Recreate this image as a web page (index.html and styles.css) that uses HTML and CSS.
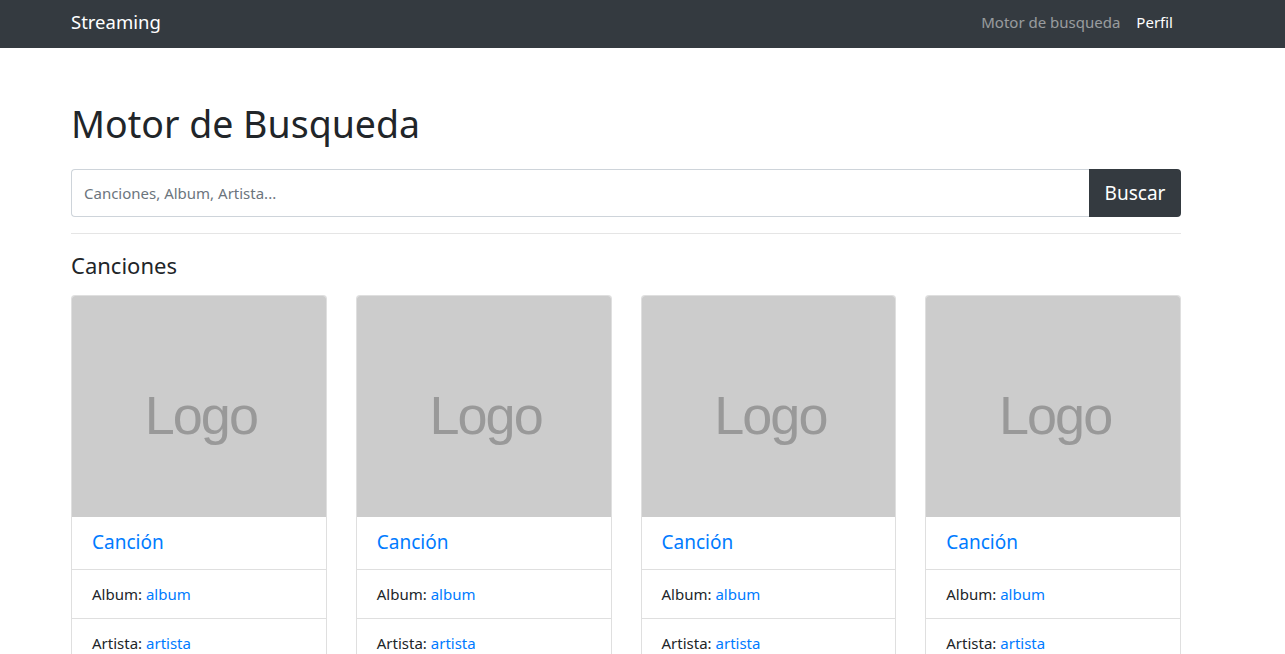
FILE: index.html
```html
<!DOCTYPE html>
<html lang="es">
<head>
<meta charset="utf-8">
<title>Streaming</title>
<link rel="stylesheet" href="styles.css">
</head>
<body>
<nav class="navbar">
  <div class="navbar-inner">
    <a class="brand" href="#">Streaming</a>
    <ul class="nav">
      <li><a class="nav-link" href="#">Motor de busqueda</a></li>
      <li><a class="nav-link active" href="#">Perfil</a></li>
    </ul>
  </div>
</nav>
<main class="container">
  <h1 class="title">Motor de Busqueda</h1>
  <form class="search">
    <input class="search-input" type="text" placeholder="Canciones, Album, Artista...">
    <button class="search-btn" type="button">Buscar</button>
  </form>
  <hr class="divider">
  <h4 class="section-title">Canciones</h4>
  <div class="cards">
    <div class="card">
      <div class="card-img"><span>Logo</span></div>
      <div class="card-body"><a href="#" class="card-title">Canción</a></div>
      <ul class="list">
        <li class="list-item">Album: <a href="#">album</a></li>
        <li class="list-item">Artista: <a href="#">artista</a></li>
      </ul>
    </div>
    <div class="card">
      <div class="card-img"><span>Logo</span></div>
      <div class="card-body"><a href="#" class="card-title">Canción</a></div>
      <ul class="list">
        <li class="list-item">Album: <a href="#">album</a></li>
        <li class="list-item">Artista: <a href="#">artista</a></li>
      </ul>
    </div>
    <div class="card">
      <div class="card-img"><span>Logo</span></div>
      <div class="card-body"><a href="#" class="card-title">Canción</a></div>
      <ul class="list">
        <li class="list-item">Album: <a href="#">album</a></li>
        <li class="list-item">Artista: <a href="#">artista</a></li>
      </ul>
    </div>
    <div class="card">
      <div class="card-img"><span>Logo</span></div>
      <div class="card-body"><a href="#" class="card-title">Canción</a></div>
      <ul class="list">
        <li class="list-item">Album: <a href="#">album</a></li>
        <li class="list-item">Artista: <a href="#">artista</a></li>
      </ul>
    </div>
  </div>
</main>
</body>
</html>
```
FILE: styles.css
```css
* { box-sizing: border-box; }
html, body { margin: 0; padding: 0; }
body {
  font-family: "Noto Sans", "Open Sans", sans-serif;
  font-size: 16px;
  line-height: 1.5;
  color: #212529;
  background: #fff;
}
a { color: #007bff; text-decoration: none; }

.navbar {
  background: #343a40;
  height: 48px;
}
.navbar-inner {
  width: 1110px;
  margin-left: 71px;
  height: 48px;
  display: flex;
  align-items: center;
  justify-content: space-between;
}
.brand {
  color: #fff;
  font-size: 18.5px;
  line-height: 30px;
  padding-bottom: 4px;
}
.nav {
  list-style: none;
  margin: 0;
  padding: 0 0 3px;
  display: flex;
}
.nav-link {
  display: block;
  padding: 8px 8px;
  color: rgba(255,255,255,.5);
  font-size: 15px;
}
.nav-link.active { color: #fff; }

.container {
  width: 1110px;
  margin-left: 71px;
  padding-top: 48px;
}
.title {
  margin: 0 0 17px;
  font-size: 37.5px;
  font-weight: 400;
  line-height: 56px;
}
.search {
  display: flex;
  height: 48px;
}
.search-input {
  flex: 1;
  height: 48px;
  border: 1px solid #ced4da;
  border-right: none;
  border-radius: 4px 0 0 4px;
  padding: 0 12px;
  font-family: inherit;
  font-size: 15px;
  color: #495057;
  outline: none;
}
.search-input::placeholder { color: #6c757d; }
.search-btn {
  width: 92px;
  height: 48px;
  border: none;
  background: #343a40;
  color: #fff;
  font-family: inherit;
  font-size: 19px;
  border-radius: 0 4px 4px 0;
}
.divider {
  border: 0;
  border-top: 1px solid rgba(0,0,0,.1);
  margin: 16px 0 0;
}
.section-title {
  margin: 16px 0 15px;
  font-size: 22px;
  font-weight: 400;
  line-height: 30px;
}
.cards {
  display: grid;
  grid-template-columns: repeat(4, 1fr);
  column-gap: 29px;
}
.card {
  border: 1px solid rgba(0,0,0,.125);
  border-radius: 4px;
  overflow: hidden;
  background: #fff;
}
.card-img {
  height: 221px;
  background: #cccccc;
  display: flex;
  align-items: center;
  justify-content: center;
}
.card-img span {
  font-family: "Liberation Sans", Arial, sans-serif;
  font-size: 54px;
  color: #999999;
  letter-spacing: -2px;
  margin-top: 18px;
  margin-left: 4px;
}
.card-body {
  padding: 12px 20px;
  line-height: 27px;
}
.card-title {
  font-size: 19px;
}
.list {
  list-style: none;
  margin: 0;
  padding: 0;
}
.list-item {
  border-top: 1px solid rgba(0,0,0,.125);
  padding: 12px 20px;
  line-height: 24px;
  font-size: 15px;
}
```
